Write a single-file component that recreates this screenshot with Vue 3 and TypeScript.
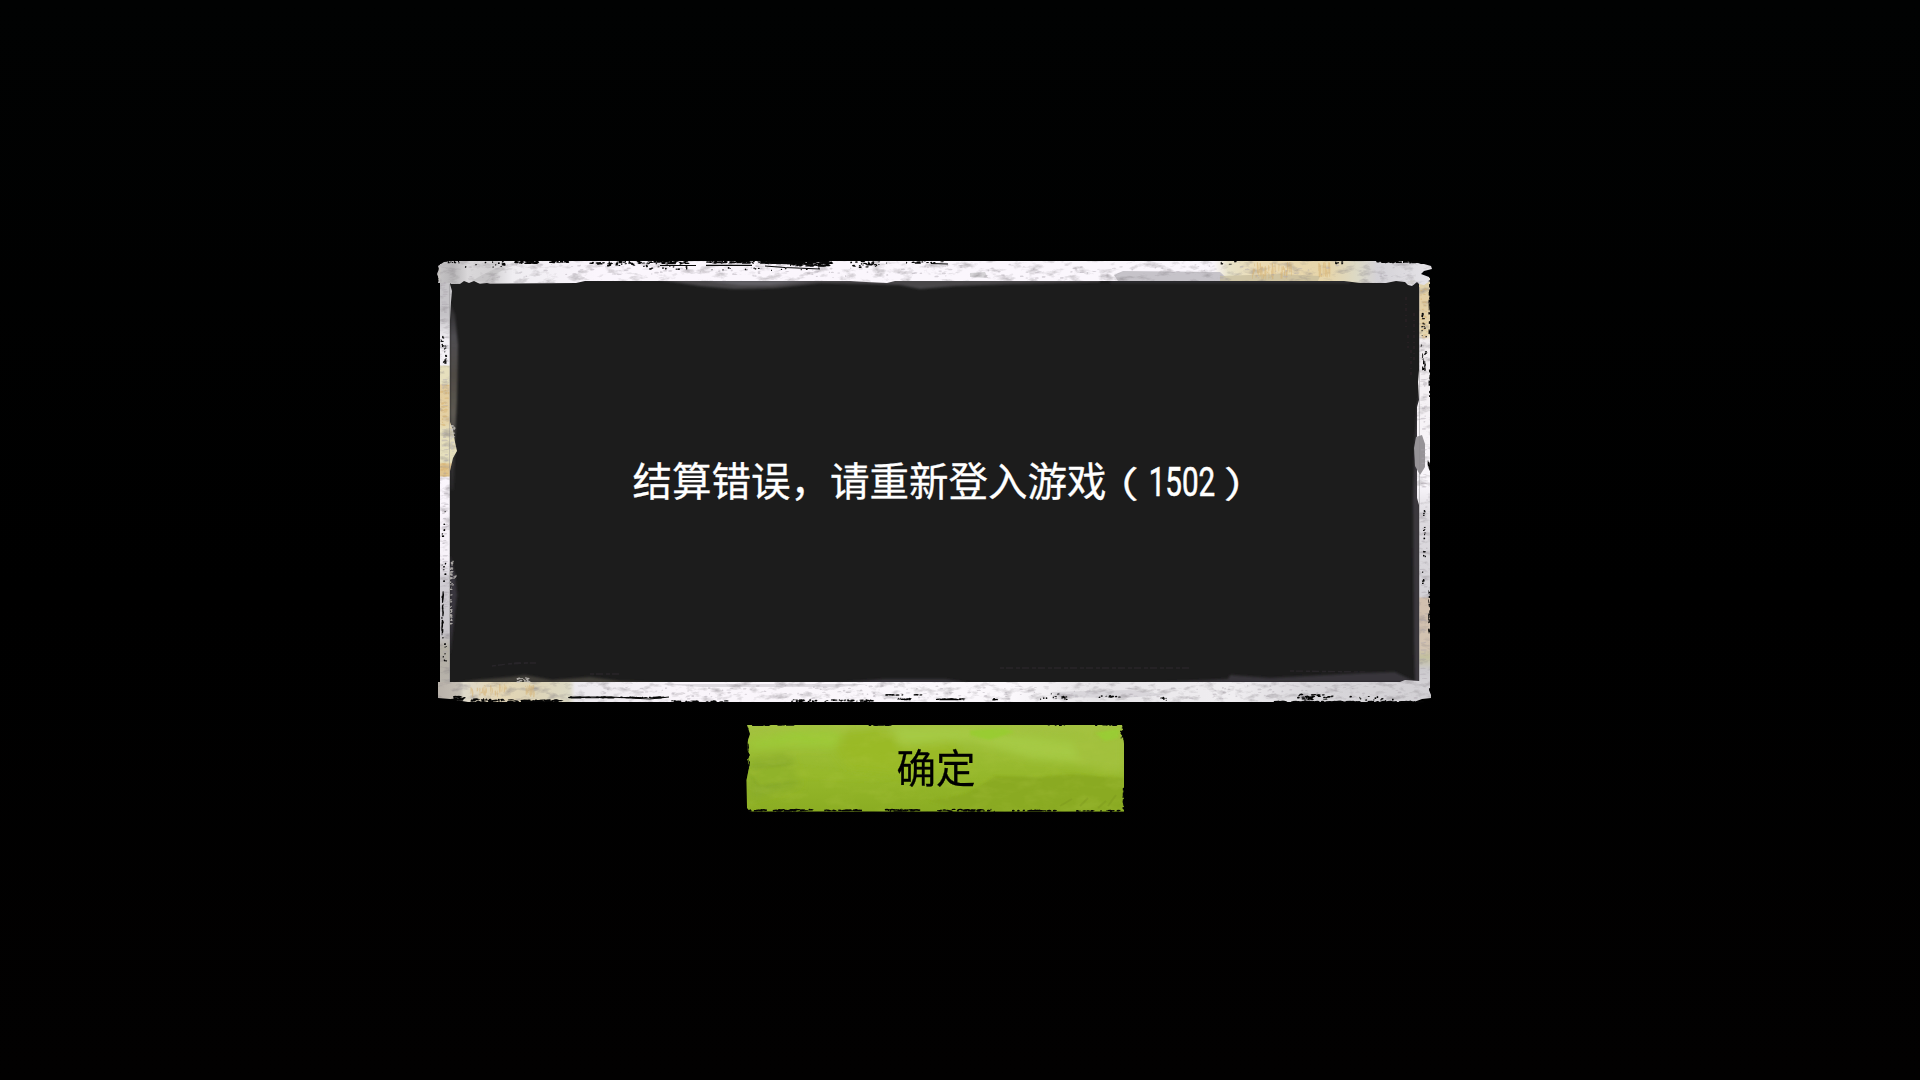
<script setup lang="ts">
interface Cluster { x: number; y: number; w: number; h: number; n: number; s: number; v?: boolean }

let seed = 1502
const rnd = (): number => {
  seed = (seed * 16807) % 2147483647
  return seed / 2147483647
}

/* Scatters small elongated flecks inside every cluster and returns one path. */
const flecks = (list: Cluster[]): string => {
  let d = ''
  for (const c of list) {
    for (let i = 0; i < c.n; i++) {
      const long = 1 + rnd() * c.s
      const thin = 0.7 + rnd() * 1
      const w = c.v ? thin : long
      const h = c.v ? long : thin
      const x = c.x + rnd() * Math.max(0, c.w - w)
      const y = c.y + rnd() * Math.max(0, c.h - h)
      d += `M${x.toFixed(1)} ${y.toFixed(1)}l${(w * 0.6).toFixed(1)} -.3l${(w * 0.4).toFixed(1)} ${(h * 0.5).toFixed(1)}l${(-w * 0.3).toFixed(1)} ${(h * 0.6).toFixed(1)}l${(-w * 0.7).toFixed(1)} 0z`
    }
  }
  return d
}

const tears = flecks([
  { x: 443, y: 260, w: 18, h: 4, n: 12, s: 2 },
  { x: 462, y: 261, w: 50, h: 7, n: 9, s: 1 },
  { x: 501, y: 261, w: 5, h: 5, n: 8, s: 2 },
  { x: 514, y: 260.5, w: 26, h: 4, n: 30, s: 4 },
  { x: 549, y: 260.5, w: 21, h: 3, n: 22, s: 3 },
  { x: 582, y: 262, w: 24, h: 3, n: 12, s: 4 },
  { x: 606, y: 261, w: 30, h: 6, n: 24, s: 4 },
  { x: 636, y: 260.5, w: 54, h: 4, n: 58, s: 5 },
  { x: 640, y: 264, w: 50, h: 6, n: 18, s: 2 },
  { x: 706, y: 260.5, w: 50, h: 3.5, n: 58, s: 6 },
  { x: 757, y: 260.5, w: 76, h: 4, n: 150, s: 8 },
  { x: 790, y: 263, w: 44, h: 4, n: 50, s: 5 },
  { x: 700, y: 267, w: 120, h: 4, n: 15, s: 1 },
  { x: 848, y: 261, w: 34, h: 8, n: 30, s: 3 },
  { x: 885, y: 261, w: 60, h: 3, n: 12, s: 4 },
  { x: 1214, y: 261, w: 30, h: 4, n: 5, s: 2 },
  { x: 1335, y: 261, w: 12, h: 4, n: 6, s: 2 },
  { x: 1375, y: 260.5, w: 46, h: 3, n: 44, s: 6 },
  { x: 450, y: 696, w: 16, h: 5, n: 26, s: 5 },
  { x: 470, y: 698.5, w: 60, h: 4, n: 40, s: 6 },
  { x: 520, y: 699.5, w: 44, h: 3, n: 44, s: 7 },
  { x: 567, y: 696.8, w: 102, h: 1.8, n: 50, s: 9 },
  { x: 660, y: 700.5, w: 70, h: 2, n: 24, s: 5 },
  { x: 790, y: 699.5, w: 85, h: 3, n: 50, s: 4 },
  { x: 883, y: 694, w: 40, h: 2, n: 12, s: 5 },
  { x: 894, y: 698, w: 18, h: 2.5, n: 14, s: 4 },
  { x: 934, y: 698.5, w: 32, h: 2, n: 28, s: 6 },
  { x: 992, y: 698, w: 8, h: 3, n: 8, s: 3 },
  { x: 1040, y: 693, w: 28, h: 7, n: 10, s: 2 },
  { x: 1062, y: 696, w: 6, h: 5, n: 9, s: 2 },
  { x: 1096, y: 695, w: 28, h: 4, n: 9, s: 3 },
  { x: 1159, y: 697, w: 8, h: 4, n: 9, s: 3 },
  { x: 1296, y: 693, w: 38, h: 8, n: 35, s: 4 },
  { x: 1272, y: 701, w: 154, h: 2, n: 95, s: 7 },
  { x: 1345, y: 696, w: 50, h: 6, n: 12, s: 2 },
  { x: 440.5, y: 335, w: 4, h: 12, n: 8, s: 2, v: true },
  { x: 443, y: 345, w: 5, h: 19, n: 13, s: 2 },
  { x: 441, y: 510, w: 6, h: 30, n: 5, s: 2 },
  { x: 441, y: 563, w: 7, h: 28, n: 6, s: 1.5 },
  { x: 441.3, y: 590, w: 2.7, h: 50, n: 24, s: 6, v: true },
  { x: 442, y: 640, w: 6, h: 26, n: 8, s: 1 },
  { x: 1428.5, y: 280, w: 2, h: 55, n: 20, s: 4, v: true },
  { x: 1421, y: 313, w: 6, h: 28, n: 15, s: 1.5 },
  { x: 1420, y: 342, w: 8, h: 14, n: 6, s: 2 },
  { x: 1422, y: 353, w: 4, h: 18, n: 12, s: 4, v: true },
  { x: 1428.5, y: 364, w: 2, h: 34, n: 10, s: 3, v: true },
  { x: 1427.5, y: 460, w: 3, h: 12, n: 8, s: 4, v: true },
  { x: 1423, y: 510, w: 3, h: 8, n: 4, s: 1 },
  { x: 1423, y: 526, w: 3, h: 16, n: 7, s: 1 },
  { x: 1423, y: 551, w: 3, h: 8, n: 4, s: 1 },
  { x: 1422, y: 570, w: 3, h: 15, n: 7, s: 1 },
  { x: 1428, y: 590, w: 2.5, h: 44, n: 26, s: 2, v: true },
])

const greySpecks = flecks([
  { x: 455, y: 264, w: 960, h: 15, n: 170, s: 4 },
  { x: 590, y: 685, w: 830, h: 15, n: 180, s: 4 },
  { x: 441, y: 280, w: 8, h: 400, n: 75, s: 6 },
  { x: 1420, y: 340, w: 8, h: 340, n: 60, s: 6 },
])

/* Paint chips that spill past the inner edge of the frame. */
const chips = flecks([
  { x: 449, y: 560, w: 5, h: 26, n: 22, s: 2.5 },
  { x: 449, y: 586, w: 4, h: 40, n: 22, s: 3 },
  { x: 453, y: 575, w: 4, h: 6, n: 6, s: 1.5 },
  { x: 516, y: 677, w: 16, h: 6, n: 20, s: 3 },
  { x: 450, y: 425, w: 6, h: 28, n: 26, s: 3 },
  { x: 438, y: 265, w: 3, h: 18, n: 16, s: 2 },
  { x: 1408, y: 280, w: 8, h: 5, n: 12, s: 3 },
])

const buttonTears = flecks([
  { x: 751, y: 724.5, w: 20, h: 1.6, n: 10, s: 6 },
  { x: 777, y: 724.5, w: 22, h: 1.5, n: 10, s: 6 },
  { x: 868, y: 724.5, w: 26, h: 1.8, n: 22, s: 6 },
  { x: 1045, y: 724.5, w: 24, h: 1.3, n: 6, s: 4 },
  { x: 1090, y: 724.5, w: 32, h: 1.5, n: 10, s: 4 },
  { x: 746.5, y: 727, w: 2.5, h: 32, n: 20, s: 4, v: true },
  { x: 746.5, y: 756, w: 3.5, h: 13, n: 16, s: 3, v: true },
  { x: 748, y: 809, w: 20, h: 3, n: 14, s: 4 },
  { x: 772, y: 809, w: 42, h: 3, n: 40, s: 5 },
  { x: 824, y: 809.5, w: 40, h: 2, n: 30, s: 5 },
  { x: 884, y: 809, w: 38, h: 3, n: 34, s: 5 },
  { x: 936, y: 809, w: 60, h: 3, n: 36, s: 5 },
  { x: 1012, y: 809.8, w: 45, h: 2, n: 22, s: 6 },
  { x: 1075, y: 810, w: 46, h: 2, n: 16, s: 4 },
  { x: 1120, y: 727, w: 5, h: 14, n: 14, s: 2 },
  { x: 1122.5, y: 786, w: 2.5, h: 24, n: 15, s: 3, v: true },
])

/* Vertical ochre streaks of worn paint. */
const ochre = flecks([
  { x: 1252, y: 262, w: 40, h: 17, n: 44, s: 12, v: true },
  { x: 1318, y: 262, w: 14, h: 16, n: 18, s: 12, v: true },
  { x: 470, y: 684, w: 40, h: 13, n: 30, s: 6, v: true },
  { x: 525, y: 684, w: 10, h: 13, n: 22, s: 8, v: true },
  { x: 440, y: 385, w: 10, h: 44, n: 24, s: 5 },
  { x: 440, y: 463, w: 10, h: 14, n: 14, s: 5 },
  { x: 1420, y: 285, w: 8, h: 55, n: 24, s: 4 },
])
</script>

<template>
  <main class="screen">
    <section class="dialog" role="alertdialog">
      <svg class="art" viewBox="430 250 1010 462" aria-hidden="true">
        <defs>
          <linearGradient id="topBand" gradientUnits="userSpaceOnUse" x1="438" x2="1432" y1="0" y2="0">
            <stop offset="0" stop-color="#c6c4c6" />
            <stop offset=".015" stop-color="#b7b5b7" />
            <stop offset=".03" stop-color="#dad8da" />
            <stop offset=".055" stop-color="#d2d0d2" />
            <stop offset=".075" stop-color="#efedf1" />
            <stop offset=".16" stop-color="#fbf6fd" />
            <stop offset=".78" stop-color="#fbf7fd" />
            <stop offset=".795" stop-color="#e8e3c9" />
            <stop offset=".83" stop-color="#ebdab2" />
            <stop offset=".895" stop-color="#e6d5aa" />
            <stop offset=".925" stop-color="#dcd9c6" />
            <stop offset=".945" stop-color="#d4d2d7" />
            <stop offset="1" stop-color="#e6e4e8" />
          </linearGradient>
          <linearGradient id="bottomBand" gradientUnits="userSpaceOnUse" x1="438" x2="1432" y1="0" y2="0">
            <stop offset="0" stop-color="#b9b2aa" />
            <stop offset=".022" stop-color="#c4beb4" />
            <stop offset=".026" stop-color="#ded9cb" />
            <stop offset=".06" stop-color="#e4d6b4" />
            <stop offset=".1" stop-color="#ddd4b8" />
            <stop offset=".132" stop-color="#dcd9c4" />
            <stop offset=".138" stop-color="#ece9ed" />
            <stop offset=".24" stop-color="#faf5fb" />
            <stop offset=".58" stop-color="#fbf8fc" />
            <stop offset=".66" stop-color="#e7e5e8" />
            <stop offset=".8" stop-color="#f0eef1" />
            <stop offset=".88" stop-color="#d8d6da" />
            <stop offset="1" stop-color="#d2d0d4" />
          </linearGradient>
          <linearGradient id="leftBand" gradientUnits="userSpaceOnUse" x1="0" x2="0" y1="264" y2="690">
            <stop offset="0" stop-color="#c7c5c8" />
            <stop offset=".12" stop-color="#c4c2c6" />
            <stop offset=".18" stop-color="#f3f0f5" />
            <stop offset=".237" stop-color="#f3f0f5" />
            <stop offset=".24" stop-color="#e6dfbd" />
            <stop offset=".28" stop-color="#e6dfbd" />
            <stop offset=".285" stop-color="#e2cb9c" />
            <stop offset=".37" stop-color="#e5d1a5" />
            <stop offset=".39" stop-color="#e6deba" />
            <stop offset=".465" stop-color="#e5dfbd" />
            <stop offset=".47" stop-color="#dfc38e" />
            <stop offset=".498" stop-color="#dfc38e" />
            <stop offset=".5" stop-color="#fbf6fd" />
            <stop offset=".69" stop-color="#f7f2f9" />
            <stop offset=".74" stop-color="#d1ced4" />
            <stop offset=".87" stop-color="#c8c5ca" />
            <stop offset=".9" stop-color="#b3afa4" />
            <stop offset="1" stop-color="#b8b3ac" />
          </linearGradient>
          <linearGradient id="rightBand" gradientUnits="userSpaceOnUse" x1="0" x2="0" y1="275" y2="695">
            <stop offset="0" stop-color="#ddd4af" />
            <stop offset=".06" stop-color="#e4cea3" />
            <stop offset=".14" stop-color="#e3d6b0" />
            <stop offset=".155" stop-color="#f2eef0" />
            <stop offset=".5" stop-color="#faf7fc" />
            <stop offset=".57" stop-color="#dedbe0" />
            <stop offset=".765" stop-color="#d4d2d7" />
            <stop offset=".77" stop-color="#d1bfae" />
            <stop offset=".89" stop-color="#d2c3b1" />
            <stop offset=".91" stop-color="#c3c09e" />
            <stop offset=".94" stop-color="#cbc9cd" />
            <stop offset="1" stop-color="#dbd9dd" />
          </linearGradient>
          <linearGradient id="shadeLeft" gradientUnits="userSpaceOnUse" x1="0" x2="0" y1="298" y2="490">
            <stop offset="0" stop-color="#514f54" stop-opacity=".1" />
            <stop offset=".2" stop-color="#5a585d" stop-opacity=".8" />
            <stop offset=".4" stop-color="#4f4b45" />
            <stop offset=".6" stop-color="#5d5952" />
            <stop offset="1" stop-color="#444147" stop-opacity=".2" />
          </linearGradient>
          <filter id="soft" x="-10%" y="-100%" width="120%" height="300%">
            <feGaussianBlur stdDeviation="1.3" />
          </filter>
          <filter id="mottle" x="0" y="0" width="100%" height="100%" color-interpolation-filters="sRGB">
            <feTurbulence type="fractalNoise" baseFrequency=".07 .16" numOctaves="4" seed="4" />
            <feColorMatrix values="0 0 0 0 .5  0 0 0 0 .48  0 0 0 0 .5  1.3 0 0 0 -.66" />
            <feComposite in2="SourceAlpha" operator="in" result="m" />
            <feMerge>
              <feMergeNode in="SourceGraphic" />
              <feMergeNode in="m" />
            </feMerge>
          </filter>
        </defs>

        <rect x="449" y="278" width="971" height="407" fill="#1c1c1c" />

        <g filter="url(#soft)">
          <path d="M660 280L700 286L735 289L775 288L820 283L870 284L900 285L920 289L955 286L1010 284L1100 282V279H660Z" fill="#48464a" />
          <path d="M706 281L740 285L770 285L810 281Z" fill="#646267" />
          <path d="M1110 281H1350V283H1110Z" fill="#343337" />
          <path d="M450 301L455 315L458 345L457 400L455 440L454 490H450Z" fill="url(#shadeLeft)" />
          <path d="M450 555L455 574L457 595L454 620L450 655Z" fill="#39363c" />
          <path d="M1420 390L1417 405L1415 440L1413 500L1414 640L1415 684H1420Z" fill="#3b383d" />
          <path d="M455 683L475 680L510 677L525 675L552 680L590 677L620 681L680 683Z" fill="#403e38" />
          <path d="M830 683L885 679L945 679L970 683ZM1140 683L1228 679L1230 675L1270 678L1365 673L1395 672L1416 682Z" fill="#38363a" />
        </g>
        <path d="M492 666L516 663H536M508 664L528 663M590 674H620M1290 671L1365 672M1000 668H1190" fill="none" stroke="#282529" stroke-width="1.4" stroke-dasharray="4 2 7 3" />
        <path d="M1406 297V330M1408 335V348M1411 350V375M1414 313V360" stroke="#302329" stroke-width="1" stroke-dasharray="3 4 1 3" />

        <g filter="url(#mottle)">
          <path d="M440 264H450V284L452 291L451 302L450 320V422L453 430L455 442L457 451L453 458L450 471V682H440Z" fill="url(#leftBand)" />
          <path d="M1419 276L1430 278V688L1419 690V505L1417 498V434L1417 407L1419 400L1418 382L1419 370Z" fill="url(#rightBand)" />
          <path d="M438 266L444 262L450 261H1412L1421 264L1424 264L1431 266L1432 269L1424 271L1421 274L1429 277L1430 281L1424 285L1419 284L1417 282L1412 286L1408 285L1405 282L1396 281L1386 283L1360 283L1344 281H1110L895 281L887 283L866 282L850 281H585L576 283L451 284L450 283H438L439 279L437 274L439 269Z" fill="url(#topBand)" />
          <path d="M438 682H1400L1405 680L1419 681H1430L1429 690L1431 695V698L1422 699L1414 702H500L468 702L450 699L438 698Z" fill="url(#bottomBand)" />
          <path d="M1114 275L1123 271L1220 272L1230 281H1127L1118 281Z" fill="#c6c3c9" />
          <path d="M1220 276L1280 274L1320 276L1318 281H1220Z" fill="#c5bb9b" opacity=".7" />
          <path d="M472 281L482 275L501 266L505 269L492 276L487 282ZM970 273L985 272L988 278L970 277Z" fill="#bcbabd" opacity=".6" />
          <path d="M660 684H868L840 687H700ZM1050 692L1130 690L1170 695L1120 698L1060 697Z" fill="#d2ced4" opacity=".7" />
        </g>
        <path d="M1416 437L1422 435L1425 444L1425 467L1420 475L1415 466L1414 448Z" fill="#969397" />
        <path :d="chips" fill="#c9c5c0" opacity=".8" />
        <path :d="ochre" fill="#d6ae69" opacity=".5" />
        <path :d="greySpecks" fill="#aaa5ae" opacity=".45" />
        <path d="M449.5 284V682M1419.5 287V681" stroke="#8a888b" stroke-width=".7" opacity=".6" />
        <path :d="tears" fill="#050505" />
        <path d="M660 265.5H696M706 265.3H752M765 266L785 267.5L820 269M765 263L800 264L826 266M931 263.5L948 264M570 697H610L650 699L669 697" fill="none" stroke="#080808" stroke-width="1.2" />
        <path d="M460 284L464 281L469 283L474 281L480 284L487 283L490 284Z" fill="#1c1c1c" />
      </svg>
      <p class="message">结算错误，请重新登入游戏<span class="paren open"><span>（</span></span><span class="code"><span>1502</span></span><span class="paren close"><span>）</span></span></p>
    </section>

    <button class="confirm" type="button">
      <svg class="paint" viewBox="742 720 388 96" aria-hidden="true">
        <defs>
          <linearGradient id="lime" x1="0" x2="0" y1="0" y2="1">
            <stop offset="0" stop-color="#a5c343" />
            <stop offset=".25" stop-color="#9cbe36" />
            <stop offset=".6" stop-color="#95b72a" />
            <stop offset="1" stop-color="#8aac22" />
          </linearGradient>
          <clipPath id="plate">
            <path d="M747 725H1122L1123 730L1120 733L1123 737L1124 744V789L1123 795L1124 800V811.5H750L747 808L746.5 780L749 768L747 760L750 755L747 750L748 740L750 734Z" />
          </clipPath>
          <filter id="haze"><feGaussianBlur stdDeviation="4" /></filter>
          <filter id="haze2"><feGaussianBlur stdDeviation="1.2" /></filter>
          <filter id="grain" x="0" y="0" width="100%" height="100%" color-interpolation-filters="sRGB">
            <feTurbulence type="fractalNoise" baseFrequency=".04 .09" numOctaves="5" seed="8" />
            <feColorMatrix values="0 0 0 0 .68  0 0 0 0 .78  0 0 0 0 .27  3 0 0 0 -1.3" />
          </filter>
        </defs>
        <g clip-path="url(#plate)">
          <rect x="745" y="724" width="382" height="89" fill="url(#lime)" />
          <g filter="url(#haze)">
            <path d="M750 740L800 730L842 732L835 747L790 746L748 748Z" fill="#9dca37" />
            <path d="M845 732L880 728L910 743L950 737L970 765L930 777L850 770L835 752Z" fill="#9aba25" />
            <path d="M890 727L960 727L1020 735L1110 747L1100 765L1030 758L970 740L900 746Z" fill="#a6ca44" />
            <path d="M748 760L790 755L800 785L750 800Z" fill="#89ac2a" />
            <path d="M1070 736L1124 728V774L1080 765Z" fill="#a2c13e" />
          </g>
          <g filter="url(#haze2)">
            <path d="M965 794L995 776L1040 777L1070 774L1124 778V811H960L930 801Z" fill="#8aaa20" />
            <path d="M970 730L1005 728L1015 732L989 740L970 735Z" fill="#99cc33" />
            <path d="M1095 733L1120 728L1118 738L1105 741Z" fill="#9acc34" />
            <path d="M748 770L795 765L835 770L900 778L875 782L810 779L760 785Z" fill="#98b92d" opacity=".5" />
          </g>
          <rect x="745" y="724" width="382" height="89" filter="url(#grain)" opacity=".2" />
          <path d="M1060 806L1072 799M1080 806L1088 798M1098 808L1106 801M1108 806L1116 795" stroke="#78931f" stroke-width="2" opacity=".35" />
        </g>
        <path :d="buttonTears" fill="#040404" />
      </svg>
      <span class="label">确定</span>
    </button>
  </main>
</template>

<style>
html,
body {
  margin: 0;
  background: #000;
}
</style>

<style scoped>
.screen {
  box-sizing: border-box;
  width: 1920px;
  height: 1080px;
  padding: 261px 50px 0 0;
  overflow: hidden;
  display: flex;
  flex-direction: column;
  align-items: center;
  gap: 23px;
  background: linear-gradient(#010202, #000 55%, #020101);
  font-family: "Noto Sans CJK SC", sans-serif;
}

.dialog {
  position: relative;
  width: 990px;
  height: 441px;
  display: flex;
  align-items: center;
  justify-content: center;
}

.art {
  position: absolute;
  left: -10px;
  top: -11px;
  width: 1010px;
  height: 462px;
}

.message {
  position: relative;
  margin: 0 0 5px;
  width: 605px;
  display: flex;
  align-items: center;
  white-space: nowrap;
  color: #fff;
  font-size: 39.5px;
  line-height: 58px;
  -webkit-text-stroke: 0.3px #fff;
}

.paren {
  flex: none;
  display: flex;
  font-size: 37px;
  font-feature-settings: "halt";
}

.paren span {
  transform: translateY(3px) scale(1.25, 0.97);
}

.open {
  width: 42px;
  justify-content: flex-end;
}

.open span {
  margin-right: 12.5px;
}

.close span {
  margin-left: 11.5px;
}

.code {
  flex: none;
  width: 66px;
  display: flex;
  justify-content: center;
  font-family: Roboto, sans-serif;
  font-size: 40px;
  -webkit-text-stroke-width: 0.6px;
}

.code span {
  transform: translateY(4px) scaleX(0.74);
}

.confirm {
  position: relative;
  width: 378px;
  height: 86px;
  padding: 0;
  border: 0;
  background: none;
  display: flex;
  align-items: center;
  justify-content: center;
  color: #000;
  font: 39.5px/58px "Noto Sans CJK SC", sans-serif;
}

.paint {
  position: absolute;
  left: -4px;
  top: -5px;
  width: 388px;
  height: 96px;
}

.label {
  position: relative;
  margin: 0 0 4px 2px;
  -webkit-text-stroke: 0.3px #000;
}
</style>
